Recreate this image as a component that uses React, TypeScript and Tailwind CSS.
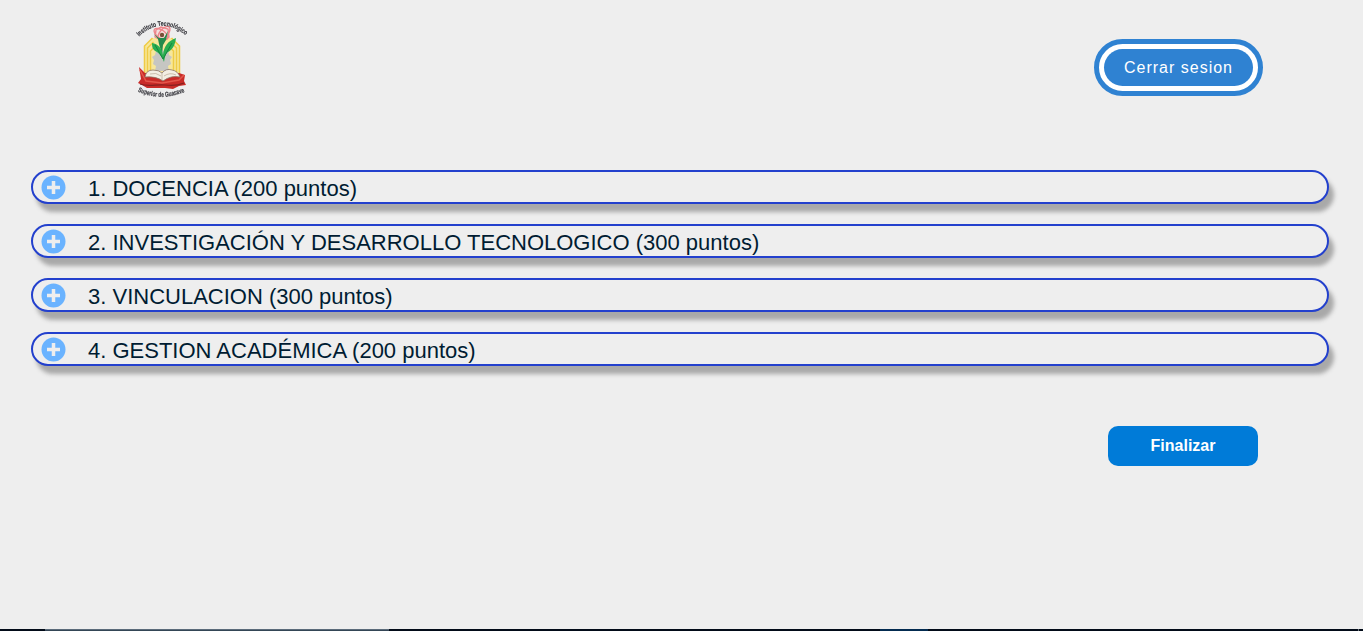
const sections = [
  '1. DOCENCIA (200 puntos)',
  '2. INVESTIGACIÓN Y DESARROLLO TECNOLOGICO (300 puntos)',
  '3. VINCULACION (300 puntos)',
  '4. GESTION ACADÉMICA (200 puntos)',
];

function Logo() {
  return (
    <svg width="64" height="92" viewBox="0 0 64 92" className="blur-[0.5px]" role="img">
      <defs>
        <path id="arcTop" d="M9 24.500 Q32 3 57 24.500" />
        <path id="arcBottom" d="M8 79 Q32 90 56.500 78.500" />
      </defs>
      <path d="M14 62V34l8-8h20l8 8v28l-10 6H22z" fill="#f7e79a" />
      <g fill="none" stroke="#efcb45" strokeWidth="1.500">
        <path d="M14.500 62V34l8-8" />
        <path d="M17.500 62V36l6-6" />
        <path d="M20.500 62V39l4-4" />
        <path d="M49.500 62V34l-8-8" />
        <path d="M46.500 62V36l-6-6" />
        <path d="M43.500 62V39l-4-4" />
      </g>
      <path d="m32 37 2.500 3 4-1 .5 4 3 2-2 3 1 4-3 2 1 5H25l1-5-3-2 1-4-2-3 3-2 1-4 3 1z" fill="#c6c6c2" />
      <ellipse cx="32" cy="22" rx="7" ry="6" fill="#f4dfdd" />
      <g fill="none" stroke="#ed858b" strokeWidth="1.400">
        <ellipse cx="31" cy="22" rx="8" ry="4" transform="rotate(35 31 22)" />
        <ellipse cx="34" cy="21" rx="8" ry="4" transform="rotate(-50 34 21)" />
        <path d="M26 18l5-3 7 2 1 8-7 4-7-4z" />
      </g>
      <circle cx="32" cy="23" r="2.200" fill="#7b4e38" />
      <path d="M24 22l5 4h5l4-7-2 9-3 5-1 9-3-10-1-5z" fill="#248b4b" />
      <path d="M22 31c6 1 10 5 11 12 1-9 5-14 13-17-1 8-4 12-8 14-3 2-3 6-4 10-2-5-4-8-7-10-4-2-5-4-5-9z" fill="#28ae50" />
      <path d="M25 33l8 14 9-16" fill="none" stroke="#158440" strokeWidth="1" />
      <path d="M9 55l6 6h34l6 2-1 6 2 4-7 1-6 3-8-1H24l-7 0-5-3-4-2 3-4z" fill="#c92b28" />
      <path d="M10 58l6 11 16 2 17-3 5-5" fill="none" stroke="#e4564b" strokeWidth="1.500" />
      <path d="M10 72c8 3 17 0 25 1 7 1 12 1 19-2" fill="none" stroke="#86201f" strokeWidth="1.200" />
      <path d="M15 65q1-7 8-7 6 0 9 3 4-5 10-3 6 1 8 7-9-2-17 4-7-5-18-4z" fill="#f3eee3" stroke="#8a7464" strokeWidth=".8" />
      <path d="M32 61v7M20 62q6-2 11 2M34 64q6-4 12-1" fill="none" stroke="#b7a894" strokeWidth=".7" />
      <g fill="#3c3c42" stroke="#3c3c42" strokeWidth=".2" fontFamily="Liberation Sans, Arial, sans-serif" fontWeight="700" fontSize="6.800">
        <text><textPath href="#arcTop" textLength="52" lengthAdjust="spacingAndGlyphs">Instituto Tecnológico</textPath></text>
        <text dy=".5"><textPath href="#arcBottom" textLength="48" lengthAdjust="spacingAndGlyphs">Superior de Guasave</textPath></text>
      </g>
    </svg>
  );
}

function PlusIcon() {
  return (
    <svg width="25" height="25" viewBox="0 0 25 25" className="shrink-0" aria-hidden="true">
      <circle cx="12.500" cy="12.500" r="12" fill="#6ab3ff" />
      <path d="M12.500 6v13M6 12.500h13" stroke="#eee" strokeWidth="3.500" />
    </svg>
  );
}

export default function App() {
  return (
    <div className="flex h-[631px] w-full flex-col overflow-hidden bg-[#eeeeee] font-['Liberation_Sans',Arial,sans-serif]">
      <header className="flex items-start justify-between pr-[100px] pl-[130px]">
        <div className="pt-3">
          <Logo />
        </div>
        <button className="mt-[39px] h-[57px] w-[169px] rounded-full border-[5px] border-[#2f82d2] bg-white p-[5px]">
          <span className="flex h-full items-center justify-center rounded-full bg-[#2f82d2] text-base tracking-[1px] whitespace-nowrap text-white">
            Cerrar sesion
          </span>
        </button>
      </header>

      <main className="flex flex-1 flex-col pt-[66px] pr-[34px] pl-[31px]">
        <div className="flex flex-col gap-5">
          {sections.map((title) => (
            <button
              key={title}
              className="flex h-[34px] w-full items-center rounded-full border-2 border-[#2340cd] bg-[#eeeeee] pl-2 text-left text-[22px] whitespace-nowrap text-[#001c32] shadow-[5px_8px_4px_#a9a9a9]"
            >
              <PlusIcon />
              <span className="ml-[22px] pt-[3px] leading-[27px]">{title}</span>
            </button>
          ))}
        </div>
        <button className="mt-[60px] mr-[71px] h-10 w-[150px] self-end rounded-[10px] bg-[#007bd8] text-base font-bold text-white">
          Finalizar
        </button>
      </main>

      <footer className="flex h-[2px] bg-[#020b18]">
        <div className="ml-[45px] w-[344px] border-t border-[#5b6b7a] bg-[#344656]" />
        <div className="ml-[491px] w-12 bg-[#032b50]" />
        <div className="ml-[430px] w-px bg-[#68717b]" />
      </footer>
    </div>
  );
}
